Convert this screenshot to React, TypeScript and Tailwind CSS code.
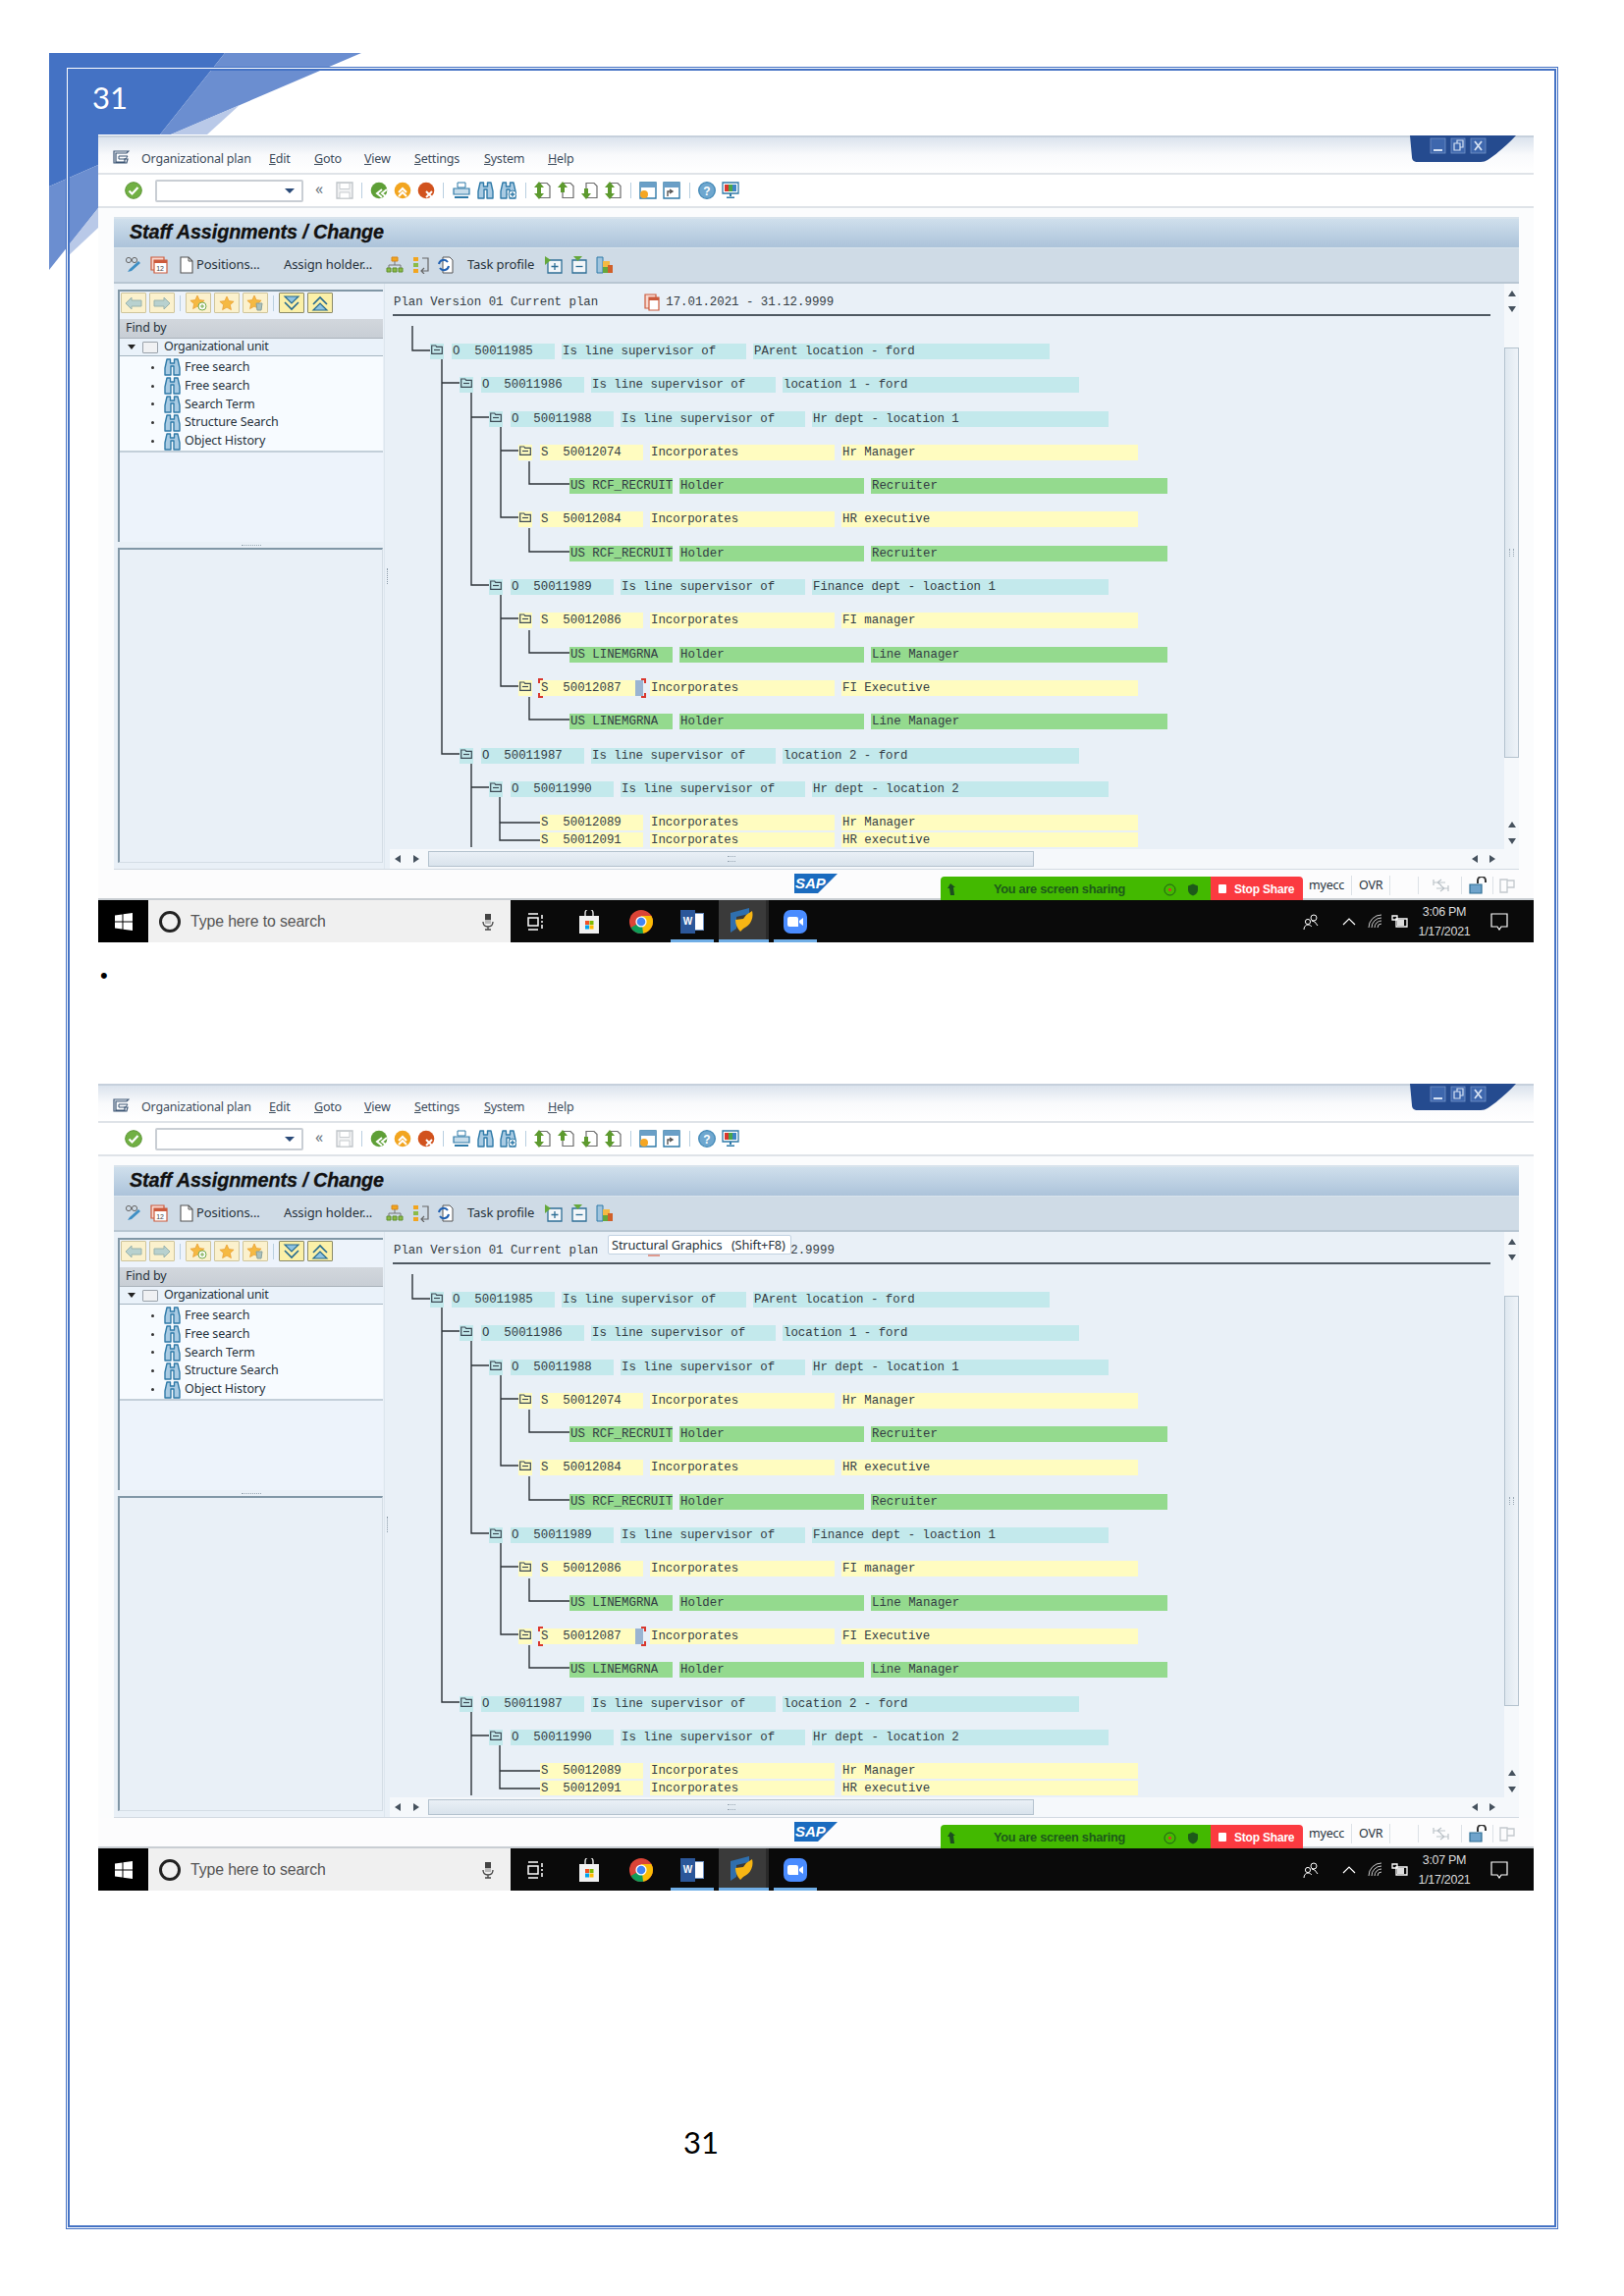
import React from "react";

const S = ({ children, w = 18, h = 18, className = "" }: { children: React.ReactNode; w?: number; h?: number; className?: string }) => (
  <svg width={w} height={h} viewBox={`0 0 ${w} ${h}`} className={`shrink-0 ${className}`}>{children}</svg>
);

const Binoc = ({ plus = false }: { plus?: boolean }) => (
  <S w={17} h={18}>
    <path d="M3 1h3.5v4h4V1H14l2 9v7h-6V8H7v9H1v-7z" fill="#a9cbe3" stroke="#2f7aa8" strokeWidth="1.4" strokeLinejoin="round" />
    {plus && <g><circle cx="13" cy="13" r="4" fill="#fff" stroke="#2f7aa8" /><path d="M13 10.5v5M10.5 13h5" stroke="#2f7aa8" strokeWidth="1.4" /></g>}
  </S>
);
const Sep = () => <div className="w-[1px] h-[16px] bg-[#b9cfe0] shrink-0" />;
const Round = ({ c, d }: { c: string; d: React.ReactNode }) => (
  <S><circle cx="9" cy="9" r="8.3" fill={c} />{d}</S>
);
const PageArrow = ({ up = false, down = false }: { up?: boolean; down?: boolean }) => (
  <S>
    <path d="M5 1.5h8l3 3v12H5z" fill="#fff" stroke="#6d6d6d" strokeWidth="1.2" />
    {up && <path d="M5 0l5 6H7v5H3V6H0z" fill="#5d9a2e" />}
    {down && <path d="M5 18l5-6H7V7H3v5H0z" fill="#5d9a2e" />}
  </S>
);
const TreeFolder = () => (
  <S w={12} h={10}>
    <path d="M.7 9.3V1h4l1 1.4h5.6v6.9z" fill="none" stroke="#3d4a55" strokeWidth="1.2" />
    <path d="M3 5.5h6" stroke="#3d4a55" strokeWidth="1.2" />
  </S>
);
const YBtn = ({ children, dark = false }: { children: React.ReactNode; dark?: boolean }) => (
  <div className={`w-[26px] h-[21px] flex items-center justify-center rounded-[1px] border ${dark ? "bg-[#fbf0a8] border-[#8b8a68]" : "bg-[#fbf1cd] border-[#cfc59c]"}`}>{children}</div>
);
const Star = () => <path d="M8 1l2.1 4.6 5 .6-3.7 3.4 1 5L8 12.1 3.6 14.6l1-5L.9 6.2l5-.6z" fill="#f5b942" stroke="#e89a2b" strokeWidth=".7" />;

const menus = [
  { t: "Organizational plan", w: "w-[130px]" },
  { t: "Edit", w: "w-[46px]" },
  { t: "Goto", w: "w-[51px]" },
  { t: "View", w: "w-[51px]" },
  { t: "Settings", w: "w-[71px]" },
  { t: "System", w: "w-[65px]" },
  { t: "Help", w: "w-[40px]" },
];

function MenuLabel({ t, i }: { t: string; i: number }) {
  if (i === 0) return <span>{t}</span>;
  return <span><span className="underline">{t[0]}</span>{t.slice(1)}</span>;
}

type Row = { m: string; k: "o" | "s" | "h"; a: string; b: string; c: string; icon?: boolean; mark?: boolean; tight?: boolean };
const LV = ["ml-[41px]", "ml-[71px]", "ml-[101px]", "ml-[131px]"];
const H = "ml-[183px]";
const rcf: Row = { m: H, k: "h", a: "US RCF_RECRUIT", b: "Holder", c: "Recruiter" };
const lm: Row = { m: H, k: "h", a: "US LINEMGRNA", b: "Holder", c: "Line Manager" };
const sup = "Is line supervisor of";
const inc = "Incorporates";
const rows: Row[] = [
  { m: LV[0], k: "o", a: "O  50011985", b: sup, c: "PArent location - ford", icon: true },
  { m: LV[1], k: "o", a: "O  50011986", b: sup, c: "location 1 - ford", icon: true },
  { m: LV[2], k: "o", a: "O  50011988", b: sup, c: "Hr dept - location 1", icon: true },
  { m: LV[3], k: "s", a: "S  50012074", b: inc, c: "Hr Manager", icon: true },
  rcf,
  { m: LV[3], k: "s", a: "S  50012084", b: inc, c: "HR executive", icon: true },
  rcf,
  { m: LV[2], k: "o", a: "O  50011989", b: sup, c: "Finance dept - loaction 1", icon: true },
  { m: LV[3], k: "s", a: "S  50012086", b: inc, c: "FI manager", icon: true },
  lm,
  { m: LV[3], k: "s", a: "S  50012087", b: inc, c: "FI Executive", icon: true, mark: true },
  lm,
  { m: LV[1], k: "o", a: "O  50011987", b: sup, c: "location 2 - ford", icon: true },
  { m: LV[2], k: "o", a: "O  50011990", b: sup, c: "Hr dept - location 2", icon: true },
  { m: "ml-[153px]", k: "s", a: "S  50012089", b: inc, c: "Hr Manager" },
  { m: "ml-[153px]", k: "s", a: "S  50012091", b: inc, c: "HR executive", tight: true },
];
const bg = { o: "bg-[#c3e9ec]", s: "bg-[#fffcc0]", h: "bg-[#94da8e]" };

function TreeRow({ r }: { r: Row }) {
  const c = bg[r.k];
  return (
    <div className={`relative flex h-[16px] shrink-0 ${r.m} ${r.tight ? "-mt-[16.5px]" : ""}`}>
      {r.icon && <div className={`w-[14px] h-[16px] mr-[8px] flex items-start justify-center pt-[1px] ${c}`}><TreeFolder /></div>}
      <div className={`relative w-[105px] pl-[1px] ${c}`}>
        {r.a}
        {r.mark && (
          <>
            <div className="absolute left-[-2px] top-[-2px] w-[5px] h-[5px] border-l-2 border-t-2 border-[#d9372e]" />
            <div className="absolute left-[-2px] bottom-[-2px] w-[5px] h-[5px] border-l-2 border-b-2 border-[#d9372e]" />
            <div className="absolute left-[103px] top-[-2px] w-[5px] h-[5px] border-r-2 border-t-2 border-[#d9372e]" />
            <div className="absolute left-[103px] bottom-[-2px] w-[5px] h-[5px] border-r-2 border-b-2 border-[#d9372e]" />
            <div className="absolute left-[97px] top-0 w-[8px] h-[16px] bg-[#9ab4d2]" />
          </>
        )}
      </div>
      <div className={`w-[188px] ml-[7px] pl-[1px] ${c}`}>{r.b}</div>
      <div className={`w-[302px] ml-[7px] pl-[1px] ${c}`}>{r.c}</div>
    </div>
  );
}

function Connectors() {
  const d = [
    "M420 332V357H438",
    "M450 366V768H468M450 390H468",
    "M480 400V596H498M480 425H498",
    "M480 778V863M480 802H498",
    "M510 435V527H528M510 459H528",
    "M539 470V493H580",
    "M539 538V562H580",
    "M510 606V699H528M510 630H528",
    "M539 642V665H580",
    "M539 710V733H580",
    "M509 812V856H550M509 838H550",
  ].join("");
  return (
    <svg className="absolute left-0 top-0" width="1135" height="541" viewBox="397 322 1135 541">
      <path d={d} fill="none" stroke="#2c3238" strokeWidth="1.4" />
    </svg>
  );
}

const searches = ["Free search", "Free search", "Search Term", "Structure Search", "Object History"];

function SapWindow({ time, tip = false }: { time: string; tip?: boolean }) {
  return (
    <div className="relative z-10 w-[1462px] h-[822px] shrink-0 flex flex-col bg-[#fbfcfd] font-['Noto_Sans',sans-serif] text-[#2b3742] border-t-2 border-[#c6d0dc]">
      {/* menu */}
      <div className="h-[38px] shrink-0 flex items-center pl-[15px] pt-[8px] border-b-2 border-[#dfe3e8] bg-gradient-to-b from-[#dbe3ed] via-[#f9fafc] to-white text-[12.5px] tracking-[-0.2px] text-[#3d4c5c]">
        <S w={17} h={14} className="mr-[12px] -mt-[4px]">
          <path d="M1 1h15l-2 2H3v9h9v-3h3l-1 4H1z" fill="none" stroke="#3d5675" strokeWidth="1.2" />
          <path d="M6 6h9l-2 3H6z" fill="none" stroke="#3d5675" strokeWidth="1" />
        </S>
        {menus.map((m, i) => (
          <div key={m.t} className={m.w}><MenuLabel t={m.t} i={i} /></div>
        ))}
      </div>
      {/* system toolbar */}
      <div className="h-[34px] shrink-0 flex items-center pl-[27px] border-b-2 border-[#dfe3e8] bg-white">
        <S>
          <circle cx="9" cy="9" r="8.3" fill="#71b044" stroke="#5a9433" />
          <path d="M4.5 9.5l3 3 6-6.5" fill="none" stroke="#fff" strokeWidth="2.2" />
        </S>
        <div className="ml-[13px] w-[151px] h-[23px] rounded-[2px] border-2 border-[#c9ced4] bg-white flex items-center justify-end pr-[7px]">
          <div className="w-0 h-0 border-l-[5px] border-r-[5px] border-t-[5px] border-l-transparent border-r-transparent border-t-[#2a4a78]" />
        </div>
        <span className="ml-[12px] w-[16px] text-[16px] text-[#6b7680] leading-none -mt-[4px]">«</span>
        <S className="ml-[5px]" w={18} h={18}>
          <path d="M1 1h16v16H1z" fill="#f0f1f2" stroke="#bfc4c8" strokeWidth="1.3" />
          <path d="M4 1.5h10v6H4zM4 11h10v6H4z" fill="#fff" stroke="#c9cdd0" />
        </S>
        <div className="ml-[8px]"><Sep /></div>
        <div className="ml-[8px] flex items-center gap-[6px]">
          <Round c="#5e9f36" d={<path d="M17 8l-5 4 5 4M12 8l-5 4 5 4" fill="none" stroke="#fff" strokeWidth="2" />} />
          <Round c="#f2a51f" d={<path d="M5 11l4-4 4 4M5 15l4-4 4 4" fill="none" stroke="#fff" strokeWidth="2" />} />
          <Round c="#d1521d" d={<path d="M9 10l6 6M15 10l-6 6" stroke="#fff" strokeWidth="2" />} />
        </div>
        <div className="ml-[8px]"><Sep /></div>
        <S className="ml-[9px]">
          <path d="M5 1h8v5H5z" fill="#fff" stroke="#2f7aa8" />
          <path d="M1 7h16v6H1z" fill="#c6dcea" stroke="#2f7aa8" strokeWidth="1.2" />
          <path d="M2 15h14v2H2z" fill="#2f7aa8" />
        </S>
        <div className="ml-[7px] flex items-center gap-[6px]"><Binoc /><Binoc plus /></div>
        <div className="ml-[9px]"><Sep /></div>
        <div className="ml-[8px] flex items-center gap-[6px]">
          <PageArrow up down /><PageArrow up /><PageArrow down /><PageArrow up down />
        </div>
        <div className="ml-[8px]"><Sep /></div>
        <div className="ml-[8px] flex items-center gap-[6px]">
          <S>
            <path d="M1 1h16v16H1z" fill="#fff" stroke="#2f7aa8" strokeWidth="1.4" /><path d="M1 1h16v5H1z" fill="#6a9fc7" />
            <circle cx="5" cy="13" r="4" fill="#f5a623" />
          </S>
          <S>
            <path d="M1 1h16v16H1z" fill="#fff" stroke="#2f7aa8" strokeWidth="1.4" /><path d="M1 1h16v5H1z" fill="#6a9fc7" />
            <path d="M5 15v-5h4M7 8l3 2-3 2" fill="none" stroke="#555" strokeWidth="1.4" />
          </S>
        </div>
        <div className="ml-[9px]"><Sep /></div>
        <div className="ml-[8px] flex items-center gap-[6px]">
          <S><circle cx="9" cy="9" r="8.3" fill="#6ea7cf" stroke="#3f86b5" strokeWidth="1.3" /><text x="9" y="13.5" textAnchor="middle" fontSize="12" fontWeight="700" fill="#fff" fontFamily="Liberation Sans">?</text></S>
          <S>
            <path d="M1 1h16v11H1z" fill="#fff" stroke="#2f7aa8" strokeWidth="1.3" />
            <path d="M3 3h4v7H3z" fill="#d9372e" /><path d="M7 3h4v7H7z" fill="#4aa64a" /><path d="M11 3h4v7h-4z" fill="#3d85c6" />
            <path d="M8 12h2v3H8zM5 15.5h8V17H5z" fill="#2f7aa8" />
          </S>
        </div>
      </div>
      <div className="h-[9px] shrink-0" />
      {/* title */}
      <div className="ml-[16px] mr-[15px] h-[32px] shrink-0 flex items-center pl-[16px] pb-[2px] border-t-2 border-[#b9c7d5] bg-gradient-to-b from-[#cfdfec] to-[#acc3da] border-b border-[#d8e3ec]">
        <span className="font-['Liberation_Sans',sans-serif] font-bold italic text-[19.8px] text-[#111] tracking-[-0.1px] [-webkit-text-stroke:0.3px_#111]">Staff Assignments / Change</span>
      </div>
      {/* app toolbar */}
      <div className="ml-[16px] mr-[15px] h-[36px] shrink-0 flex items-center bg-[#cfdbe6] border-b-2 border-[#b8c6d2] text-[13px] tracking-[-0.1px] text-[#26323c]">
        <S className="ml-[11px]">
          <circle cx="4" cy="4" r="2.6" fill="none" stroke="#666" /><circle cx="10" cy="4" r="2.6" fill="none" stroke="#666" />
          <path d="M3 16l2-3 9-8 2 2-9 8z" fill="#3f8fc4" />
        </S>
        <S className="ml-[8px]">
          <path d="M1 1h13v13H1z" fill="#f8d9d0" stroke="#cc5a3c" strokeWidth="1.2" /><path d="M4 4h13v13H4z" fill="#fff" stroke="#cc5a3c" strokeWidth="1.2" /><path d="M4 4h13v3H4z" fill="#cc5a3c" />
          <text x="10" y="15" fontSize="7" textAnchor="middle" fill="#444" fontFamily="Liberation Sans">12</text>
        </S>
        <S className="ml-[12px]" w={14}><path d="M1 1h8l4 4v12H1z" fill="#fff" stroke="#555" strokeWidth="1.1" /><path d="M9 1v4h4" fill="none" stroke="#555" /></S>
        <span className="ml-[3px] w-[89px]">Positions...</span>
        <span className="w-[104px]">Assign holder...</span>
        <S>
          <path d="M1 12h4v4H1zM7 12h4v4H7zM13 12h4v4h-4z" fill="#8cbb47" stroke="#5f8f2c" />
          <path d="M6 1h6v4H6z" fill="#f2a51f" stroke="#d6861a" /><path d="M9 5v4M3 12V9h12v3" fill="none" stroke="#777" />
        </S>
        <S className="ml-[9px]">
          <path d="M1 1h5v4H1z" fill="#f2a51f" /><path d="M1 7h5v4H1z" fill="#8cbb47" /><path d="M1 13h5v4H1z" fill="#f2a51f" />
          <path d="M10 2h6v13h-6M12 12l-3 3 3 3" fill="none" stroke="#666" strokeWidth="1.2" />
        </S>
        <S className="ml-[7px]">
          <path d="M6 1h7l3 3v13H6z" fill="#fff" stroke="#555" />
          <path d="M2 8a5 5 0 0 1 9-2M12 10a5 5 0 0 1-9 2" fill="none" stroke="#1f5fb0" strokeWidth="2" />
        </S>
        <span className="ml-[13px] w-[74px]">Task profile</span>
        <div className="flex items-center gap-[8px] ml-[5px]">
          <S><path d="M3 4h14v13H3z" fill="#f3f6f9" stroke="#2f6f96" strokeWidth="1.3" /><path d="M0 0l6 4-6 5z" fill="#65a83b" /><path d="M10 7v7M6.5 10.5h7" stroke="#2f6f96" strokeWidth="1.3" /></S>
          <S><path d="M2 4h14v13H2z" fill="#f3f6f9" stroke="#2f6f96" strokeWidth="1.3" /><path d="M3 0h9L7.5 5z" fill="#65a83b" /><path d="M5.5 10.5h7" stroke="#2f6f96" strokeWidth="1.3" /></S>
          <S>
            <path d="M1 1h6v16H1z" fill="#9fc4de" stroke="#2f7aa8" /><path d="M7 5h7v12H7z" fill="#f5b942" /><path d="M7 11h5v6H7z" fill="#65a83b" /><path d="M12 9h5v8h-5z" fill="#d1602a" />
          </S>
        </div>
      </div>
      {/* main */}
      <div className="ml-[16px] mr-[15px] h-[597px] shrink-0 flex bg-[#e9f0f7] border-b border-[#d2dae2]">
        {/* left */}
        <div className="w-[276px] pl-[4px] pt-[6px] pb-[6px] flex flex-col shrink-0 border-r border-[#dde6ee]">
          <div className="h-[257px] w-[270px] flex flex-col border-t-2 border-l-2 border-[#8197a6] bg-[#edf3fb] shrink-0 text-[12.5px] tracking-[-0.1px] text-[#26323c]">
            <div className="h-[28px] shrink-0 flex items-start pt-[1px] pl-[1px] gap-[3px]">
              <YBtn><S w={18} h={14}><path d="M1 7l6-6v3h10v6H7v3z" fill="#b8d1cf" stroke="#9ab3ad" /></S></YBtn>
              <YBtn><S w={18} h={14}><path d="M17 7l-6-6v3H1v6h10v3z" fill="#b8d1cf" stroke="#9ab3ad" /></S></YBtn>
              <div className="mx-[2px] mt-[3px]"><Sep /></div>
              <YBtn><S w={18} h={17}><Star /><circle cx="13" cy="12" r="4" fill="#fff" stroke="#74a94a" /><path d="M13 10v4M11 12h4" stroke="#74a94a" /></S></YBtn>
              <YBtn><S w={16} h={16}><Star /></S></YBtn>
              <YBtn><S w={18} h={17}><Star /><path d="M10 9h6l-1 7h-4z" fill="#a9c0bd" stroke="#88a09c" /></S></YBtn>
              <div className="mx-[2px] mt-[3px]"><Sep /></div>
              <YBtn dark><S w={18} h={16}><path d="M2 1h14L9 8z" fill="#8fc3e0" stroke="#24698f" strokeWidth="1.2" /><path d="M2 7l7 7 7-7" fill="none" stroke="#24698f" strokeWidth="1.6" /></S></YBtn>
              <YBtn dark><S w={18} h={16}><path d="M2 15h14L9 8z" fill="#8fc3e0" stroke="#24698f" strokeWidth="1.2" /><path d="M2 9l7-7 7 7" fill="none" stroke="#24698f" strokeWidth="1.6" /></S></YBtn>
            </div>
            <div className="h-[20px] shrink-0 flex items-center pl-[6px] bg-gradient-to-b from-[#d2d7dd] to-[#c8ced5] border-b border-[#aab3bb]">Find by</div>
            <div className="h-[18px] shrink-0 flex items-center bg-[#eaf2fa] border-b border-[#a5b5c1]">
              <div className="ml-[8px] w-0 h-0 border-l-[4px] border-r-[4px] border-t-[5px] border-l-transparent border-r-transparent border-t-[#222]" />
              <div className="ml-[7px] w-[16px] h-[12px] border border-[#9aa2aa] bg-[#f0f1f3] rounded-[1px]" />
              <span className="ml-[6px] tracking-[-0.35px]">Organizational unit</span>
            </div>
            <div className="h-[98px] shrink-0 flex flex-col pt-[2px] bg-[#f7fbff] border-b-2 border-[#c3cfd9]">
              {searches.map((s, i) => (
                <div key={i} className="h-[19px] flex items-center">
                  <div className="ml-[32px] w-[3px] h-[3px] rounded-full bg-[#333]" />
                  <div className="ml-[10px]"><Binoc /></div>
                  <span className="ml-[4px]">{s}</span>
                </div>
              ))}
            </div>
          </div>
          <div className="h-[6px] shrink-0 flex items-center justify-center">
            <div className="w-[20px] h-[1px] border-t border-dotted border-[#9aa8b4]" />
          </div>
          <div className="flex-1 w-[270px] border-t-2 border-l-2 border-[#8197a6] bg-[#e9f0f7] border-b border-r border-b-[#d4dde5] border-r-[#d4dde5]" />
        </div>
        {/* divider */}
        <div className="w-[5px] shrink-0 flex items-center justify-center">
          <div className="h-[16px] w-[1px] border-l border-dotted border-[#8a99a6]" />
        </div>
        {/* right */}
        <div className="flex-1 min-w-0 flex flex-col">
          <div className="flex-1 flex min-h-0">
            <div className="relative flex-1 min-w-0 flex flex-col overflow-hidden font-['Liberation_Mono',monospace] text-[12.4px] leading-[16px] text-[#333c44] whitespace-pre">
              <div className="relative mx-[3px] mr-[14px] h-[33px] shrink-0 border-b-2 border-[#4f5962] flex items-center pt-[6px] pl-[1px]">
                <span>Plan Version 01 Current plan</span>
                {tip ? (
                  <>
                    <span className="ml-[196px]">2.9999</span>
                    <div className="absolute left-[260px] top-[23px] w-[12px] h-[2px] bg-[#df9a8e]" />
                    <div className="absolute left-[219px] top-[3px] h-[20px] w-[187px] rounded-[2px] border border-[#c2d2e2] bg-white flex items-center pl-[3px] font-['Noto_Sans',sans-serif] text-[12.8px] tracking-[-0.15px] text-[#26323c]">Structural Graphics   (Shift+F8)</div>
                  </>
                ) : (
                  <>
                    <S className="ml-[47px]"><path d="M1 1h11v14H1z" fill="#f8d9d0" stroke="#cc5a3c" strokeWidth="1.2" /><path d="M5 4h10v13H5z" fill="#fff" stroke="#cc5a3c" strokeWidth="1.2" /><path d="M5 4h10v3H5z" fill="#cc5a3c" /></S>
                    <span className="ml-[4px]">17.01.2021 - 31.12.9999</span>
                  </>
                )}
              </div>
              <div className="relative h-[541px] shrink-0 overflow-hidden flex flex-col pt-[28px] gap-[18.3px]">
                <Connectors />
                {rows.map((r, i) => <TreeRow key={i} r={r} />)}
              </div>
            </div>
            {/* vertical scrollbar */}
            <div className="w-[15px] shrink-0 flex flex-col items-center bg-[#f5f8fb]">
              <div className="h-[33px] w-full flex flex-col items-center pt-[7px] gap-[10px]">
                <div className="w-0 h-0 border-l-[4px] border-r-[4px] border-b-[6px] border-l-transparent border-r-transparent border-b-[#46525e]" />
                <div className="w-0 h-0 border-l-[4px] border-r-[4px] border-t-[6px] border-l-transparent border-r-transparent border-t-[#46525e]" />
              </div>
              <div className="mt-[32px] w-full h-[418px] border border-[#b4c2ce] bg-gradient-to-r from-[#dfe8f0] to-[#eef3f8] flex items-center justify-center">
                <div className="h-[8px] w-[5px] border-l border-r border-dotted border-[#9aa8b4]" />
              </div>
              <div className="mt-[65px] flex flex-col items-center gap-[11px]">
                <div className="w-0 h-0 border-l-[4px] border-r-[4px] border-b-[6px] border-l-transparent border-r-transparent border-b-[#46525e]" />
                <div className="w-0 h-0 border-l-[4px] border-r-[4px] border-t-[6px] border-l-transparent border-r-transparent border-t-[#46525e]" />
              </div>
            </div>
          </div>
          {/* horizontal scrollbar */}
          <div className="h-[20px] shrink-0 flex items-center bg-[#f5f8fb] pb-[1px]">
            <div className="ml-[5px] w-0 h-0 border-t-[4px] border-b-[4px] border-r-[6px] border-t-transparent border-b-transparent border-r-[#46525e]" />
            <div className="ml-[13px] w-0 h-0 border-t-[4px] border-b-[4px] border-l-[6px] border-t-transparent border-b-transparent border-l-[#46525e]" />
            <div className="ml-[9px] w-[617px] h-[16px] border border-[#b4c2ce] bg-gradient-to-b from-[#eaf0f6] to-[#d9e3ec] flex items-center justify-center">
              <div className="w-[8px] h-[6px] border-t border-b border-dotted border-[#9aa8b4]" />
            </div>
            <div className="ml-[446px] w-0 h-0 border-t-[4px] border-b-[4px] border-r-[6px] border-t-transparent border-b-transparent border-r-[#46525e]" />
            <div className="ml-[12px] w-0 h-0 border-t-[4px] border-b-[4px] border-l-[6px] border-t-transparent border-b-transparent border-l-[#46525e]" />
          </div>
        </div>
      </div>
      {/* status */}
      <div className="h-[31px] shrink-0 flex items-end relative bg-[#fcfcfd] border-b-2 border-[#c9ced3]">
        <svg width="44" height="20" viewBox="0 0 44 20" className="ml-[709px] mb-[5px] shrink-0">
          <path d="M0 0h44L24 20H0z" fill="#1a6bbf" />
          <text x="1" y="15" fontFamily="Liberation Sans" fontWeight="700" fontStyle="italic" fontSize="15" fill="#fff">SAP</text>
        </svg>
        <div className="relative z-10 -mb-[2px] ml-[105px] w-[275px] h-[24px] pt-[2px] rounded-tl-[4px] bg-[#43b900] flex items-center font-['Liberation_Sans',sans-serif]">
          <S className="ml-[6px]" w={12} h={14}><path d="M4 1l5 4H7l1 8H4L3 6H1z" fill="#1d4e20" /></S>
          <span className="ml-[36px] w-[173px] text-[12.8px] font-bold text-[#1d5a1a] tracking-[-0.3px]">You are screen sharing</span>
          <S w={13} h={13}><circle cx="6.5" cy="6.5" r="5.5" fill="none" stroke="#1d5a1a" /><circle cx="6.5" cy="6.5" r="1.4" fill="#e23" /></S>
          <S w={12} h={13} className="ml-[11px]"><path d="M6 .5l5 2v4c0 3-2 5-5 6-3-1-5-3-5-6v-4z" fill="#1d5a1a" /></S>
        </div>
        <div className="relative z-10 -mb-[2px] w-[94px] h-[24px] pt-[1px] rounded-tr-[4px] bg-[#fb3a40] flex items-center pl-[8px] text-white font-['Liberation_Sans',sans-serif] font-bold text-[12px] tracking-[-0.2px]">
          <div className="w-[8px] h-[9px] bg-white mr-[8px] rounded-[1px]" />Stop Share
        </div>
        <div className="h-[26px] flex items-center text-[12.5px] tracking-[-0.2px] text-[#26323c]">
          <span className="ml-[6px] w-[44px] border-r border-[#dde2e7] leading-[20px]">myecc</span>
          <span className="ml-[7px] w-[32px] border-r border-[#dde2e7] leading-[20px]">OVR</span>
          <div className="ml-[28px] mr-[14px] w-[1px] h-[18px] bg-[#dde2e7]" />
          <S w={17} h={14}><path d="M1 4h12M9 1l-4 3 4 3M16 10H4M8 7l4 3-4 3M1 1v6M16 7v6" fill="none" stroke="#bcc3c9" strokeWidth="1.2" /></S>
          <div className="ml-[12px] mr-[7px] w-[1px] h-[18px] bg-[#dde2e7]" />
          <S w={18} h={18}><path d="M9 7V4a4 4 0 0 1 8 0v2" fill="none" stroke="#333" strokeWidth="2" /><path d="M1 8h12v9H1z" fill="#6fa3cb" stroke="#2f6f96" strokeWidth="1.2" /></S>
          <div className="ml-[6px] mr-[6px] w-[1px] h-[18px] bg-[#dde2e7]" />
          <S w={16} h={15}><path d="M1 1h7v13H1zM8 2h7v7H8z" fill="none" stroke="#c2c8cd" strokeWidth="1.3" /></S>
        </div>
      </div>
      {/* taskbar */}
      <div className="flex-1 flex items-stretch bg-[#0a0a0a] relative">
        <div className="w-[51px] shrink-0 bg-black flex items-center justify-center">
          <S w={18} h={18}><path d="M0 2.5l7.5-1v7H0zM8.5 1.3L18 0v8.5H8.5zM0 9.5h7.5v7L0 15.5zM8.5 9.5H18V18l-9.5-1.3z" fill="#fff" /></S>
        </div>
        <div className="w-[369px] shrink-0 bg-[#f0f0f0] flex items-center font-['Liberation_Sans',sans-serif] text-[15.8px] text-[#555]">
          <div className="ml-[11px] w-[22px] h-[22px] rounded-full border-[3px] border-[#222]" />
          <span className="ml-[10px] w-[137px] whitespace-nowrap tracking-[-0.1px]">Type here to search</span>
          <S w={12} h={18} className="ml-[160px]"><path d="M3 1h6v10H3z" fill="#444" /><path d="M3 7h6v4H3z" fill="#bbb" /><path d="M1 9c0 4 2 5 5 5s5-1 5-5M6 14v3M3 17h6" fill="none" stroke="#444" strokeWidth="1.3" /></S>
        </div>
        <S w={18} h={18} className="ml-[16px] self-center">
          <path d="M2 1h10M2 17h10M2 5h10v8H2zM16 2v4M16 8v2M16 12v4" fill="none" stroke="#fff" strokeWidth="1.5" />
        </S>
        <S w={20} h={24} className="ml-[36px] self-center">
          <path d="M0 6h20v18H0z" fill="#f2f2f2" /><path d="M6 6V3a4 4 0 0 1 8 0v3" fill="none" stroke="#ddd" strokeWidth="1.5" />
          <path d="M6 11h4v4H6z" fill="#f25022" /><path d="M10.5 11h4v4h-4z" fill="#7fba00" /><path d="M6 15.5h4v4H6z" fill="#00a4ef" /><path d="M10.5 15.5h4v4h-4z" fill="#ffb900" />
        </S>
        <S w={24} h={24} className="ml-[31px] self-center">
          <circle cx="12" cy="12" r="12" fill="#db4437" />
          <path d="M12 12L1.6 18A12 12 0 0 0 12 24a12 12 0 0 0 4-1z" fill="#0f9d58" />
          <path d="M12 6h10.4A12 12 0 0 1 14 23.8z" fill="#fbbc05" />
          <circle cx="12" cy="12" r="5.6" fill="#fff" /><circle cx="12" cy="12" r="4.3" fill="#4285f4" />
        </S>
        <div className="ml-[28px] w-[24px] h-[24px] self-center relative shrink-0">
          <div className="absolute left-[8px] top-[3px] w-[16px] h-[18px] bg-white border border-[#6b8ec0]" />
          <div className="absolute left-0 top-0 w-[15px] h-[24px] bg-[#2b579a] flex items-center justify-center text-[10px] font-bold text-white font-['Liberation_Sans',sans-serif]">W</div>
        </div>
        <div className="ml-[15px] w-[51px] bg-[#3a3a3a] flex items-center justify-center border-r-[3px] border-[#2a2a2a]">
          <S w={26} h={30}>
            <path d="M1 6L20 1v6L7 10v12l-6 4z" fill="#2f6fae" />
            <path d="M6 13l8-1 3-4 6-4c2 8-2 15-9 18l-3 3c-3-3-5-7-5-12z" fill="#f7b513" />
          </S>
        </div>
        <div className="ml-[15px] w-[24px] h-[24px] self-center rounded-[7px] bg-[#4a8cff] flex items-center justify-center shrink-0">
          <S w={16} h={10}><path d="M0 2a2 2 0 0 1 2-2h7a2 2 0 0 1 2 2v8H2a2 2 0 0 1-2-2z" fill="#fff" /><path d="M12 4l4-3v8l-4-3z" fill="#fff" /></S>
        </div>
        {/* running app underlines */}
        <div className="absolute left-[583px] bottom-0 w-[44px] h-[3px] bg-[#70aee6]" />
        <div className="absolute left-[632px] bottom-0 w-[51px] h-[3px] bg-[#70aee6]" />
        <div className="absolute left-[688px] bottom-0 w-[44px] h-[3px] bg-[#70aee6]" />
        <div className="ml-auto flex items-center text-white font-['Liberation_Sans',sans-serif]">
          <S w={16} h={18}><circle cx="11" cy="5" r="3" fill="none" stroke="#fff" /><circle cx="5" cy="9" r="2.6" fill="none" stroke="#fff" /><path d="M1 17c0-3 2-5 4-5s3 1 4 2M9 8l3 1 3 4" fill="none" stroke="#fff" /></S>
          <S w={14} h={9} className="ml-[24px]"><path d="M1 8l6-6 6 6" fill="none" stroke="#fff" strokeWidth="1.2" /></S>
          <S w={15} h={15} className="ml-[12px]"><path d="M1 14A13 13 0 0 1 14 1M4 14A10 10 0 0 1 14 4M7 14a7 7 0 0 1 7-7M10 14a4 4 0 0 1 4-4" fill="none" stroke="#ccc" /></S>
          <S w={17} h={14} className="ml-[9px]"><path d="M1 1h5v4H1zM5 4h11v8H5z" fill="none" stroke="#fff" strokeWidth="1.3" /><path d="M6 5h7v6H6z" fill="#ddd" /></S>
          <div className="ml-[9px] w-[56px] flex flex-col items-center text-[12.5px] leading-[20px] tracking-[-0.3px] text-[#ddd]">
            <span>{time}</span><span>1/17/2021</span>
          </div>
          <S w={18} h={18} className="ml-[19px] mr-[26px]"><path d="M1 1h16v13h-6l-2 3-2-3H1z" fill="none" stroke="#fff" strokeWidth="1.2" /></S>
        </div>
      </div>
      {/* window buttons */}
      <svg className="absolute right-[18px] top-[-2px]" width="108" height="28" viewBox="0 0 108 28">
        <path d="M0 0h108C99 10 88 19 79 25c-2 1-4 2-7 2H8c-4 0-6-2-6-5z" fill="#254b8f" />
        <g fill="#3e67ad" stroke="#7393c7" strokeWidth=".8"><rect x="21" y="3" width="15" height="15" /><rect x="42" y="3" width="14" height="15" /><rect x="62" y="3" width="15" height="15" /></g>
        <path d="M24 15h9" stroke="#d5e1f3" strokeWidth="2" />
        <path d="M45 8h6v7h-6zM48 8V5h6v7h-3" fill="none" stroke="#d5e1f3" strokeWidth="1.2" />
        <path d="M66 6l7 9M73 6l-7 9" stroke="#d5e1f3" strokeWidth="1.8" />
      </svg>
    </div>
  );
}

export default function App() {
  return (
    <div className="relative w-[1654px] h-[2339px] overflow-hidden bg-white pt-[68px] pl-[67px] font-['Noto_Sans',sans-serif]">
      {/* page corner decoration */}
      <svg className="absolute left-0 top-0" width="400" height="300" viewBox="0 0 400 300">
        <path d="M50 54H229L163 137H100V168L50 190z" fill="#4472c4" />
        <path d="M229 54H368L174 137H163z" fill="#6b8ed0" />
        <path d="M50 190L100 168V212L50 275z" fill="#6b8ed0" />
        <path d="M244 107L211 137H174z" fill="#b9c9e8" />
        <path d="M68 252L100 212V232L68 262z" fill="#b9c9e8" />
      </svg>
      <span className="absolute left-[94px] top-[77px] text-[31px] leading-[44px] text-white font-['Lato',sans-serif] z-20">31</span>

      <div className="relative w-[1520px] h-[2203px] border border-[#4472c4]">
        <div className="w-full h-full border border-white">
          <div className="w-full h-full border-2 border-[#4472c4] pl-[29px] pt-[66px] flex flex-col">
            <SapWindow time="3:06 PM" />
            <div className="h-[144px] shrink-0 pt-[22px] pl-[2px] text-[22px] leading-[24px] text-black font-['Liberation_Sans',sans-serif]">•</div>
            <SapWindow time="3:07 PM" tip />
            <div className="ml-[596px] mt-[236px] h-[40px] text-[31px] leading-[40px] text-black font-['Lato',sans-serif]">31</div>
          </div>
        </div>
      </div>
    </div>
  );
}
